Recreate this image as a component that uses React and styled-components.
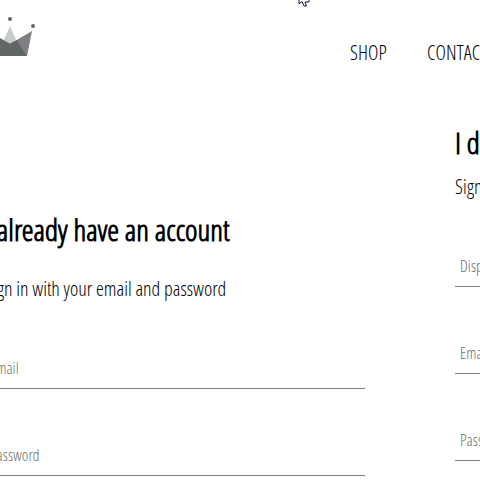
import React from "react";
import styled, { createGlobalStyle } from "styled-components";

const GlobalStyle = createGlobalStyle`
  * { box-sizing: border-box; }
  body {
    margin: 0;
    background: #fff;
    color: #000;
    font-family: "Open Sans Condensed Light", "Open Sans", sans-serif;
    font-size: 20px;
  }
`;

const Page = styled.div`
  position: relative;
  width: 480px;
  height: 480px;
  overflow: hidden;
  background: #fff;
`;

const Header = styled.header`
  display: flex;
  height: 106px;
  margin-left: -15px;
`;

const Logo = styled.svg`
  display: block;
  flex: none;
  width: 50px;
  height: 39px;
  margin-top: 17px;
`;

const Nav = styled.nav`
  display: flex;
  gap: 40px;
  margin: 39px 0 0 315px;
`;

const NavLink = styled.a`
  flex: none;
  line-height: 27px;
  letter-spacing: 0.1px;
  font-kerning: none;
  white-space: nowrap;
`;

const Columns = styled.main`
  display: grid;
  grid-template-columns: 380px 380px;
  column-gap: 90px;
  margin-left: -15px;
`;

const Panel = styled.section`
  display: flex;
  flex-direction: column;
  padding-top: ${(p) => p.$top}px;
`;

const Title = styled.h2`
  margin: 0;
  font-size: 30px;
  font-weight: 700;
  line-height: 42px;
  letter-spacing: 0.04px;
  white-space: nowrap;
`;

const Subtitle = styled.span`
  margin-top: ${(p) => p.$gap}px;
  line-height: 27px;
  white-space: nowrap;
`;

const Form = styled.form`
  display: flex;
  flex-direction: column;
  gap: 45px;
  margin-top: ${(p) => p.$gap}px;
`;

const Field = styled.label`
  height: 42px;
  padding: 10px 5px 0;
  border-bottom: 1px solid #808080;
  color: #6c6c6c;
  font-size: 16px;
  line-height: 22px;
  letter-spacing: 0.05px;
  white-space: nowrap;
`;

const Cursor = styled.svg`
  position: absolute;
  left: 298px;
  top: 0;
  width: 13px;
  height: 8px;
`;

function Crown() {
  return (
    <Logo viewBox="0 0 50 39">
      <path d="M3 14 25 27 9 39Z" fill="#808284" />
      <path d="M47 14 25 27 41 39H42Z" fill="#808084" />
      <path d="M25 9 18.5 23.5 25 27 31.5 23.5Z" fill="#c5cec9" />
      <path d="M14 21 25 26.5 32 23 41.5 39H9Z" fill="#616767" />
      <circle cx="25" cy="2" r="2" fill="#616767" />
      <circle cx="48" cy="9" r="2" fill="#616767" />
      <circle cx="2" cy="9" r="2" fill="#616767" />
    </Logo>
  );
}

export default function App() {
  return (
    <Page>
      <GlobalStyle />
      <Header>
        <Crown />
        <Nav>
          <NavLink>SHOP</NavLink>
          <NavLink>CONTACT</NavLink>
        </Nav>
      </Header>
      <Columns>
        <Panel $top={103}>
          <Title>I already have an account</Title>
          <Subtitle $gap={24}>Sign in with your email and password</Subtitle>
          <Form $gap={45}>
            <Field>Email</Field>
            <Field>Password</Field>
          </Form>
        </Panel>
        <Panel $top={16}>
          <Title>I do not have an account</Title>
          <Subtitle $gap={9}>Sign up with your email and password</Subtitle>
          <Form $gap={45}>
            <Field>Display Name</Field>
            <Field>Email</Field>
            <Field>Password</Field>
          </Form>
        </Panel>
      </Columns>
      <Cursor viewBox="0 0 13 8">
        <path d="M1 0V4L4 1.5 6 6H8.5L7 2H11V0" fill="#fff" stroke="#10183a" />
      </Cursor>
    </Page>
  );
}
